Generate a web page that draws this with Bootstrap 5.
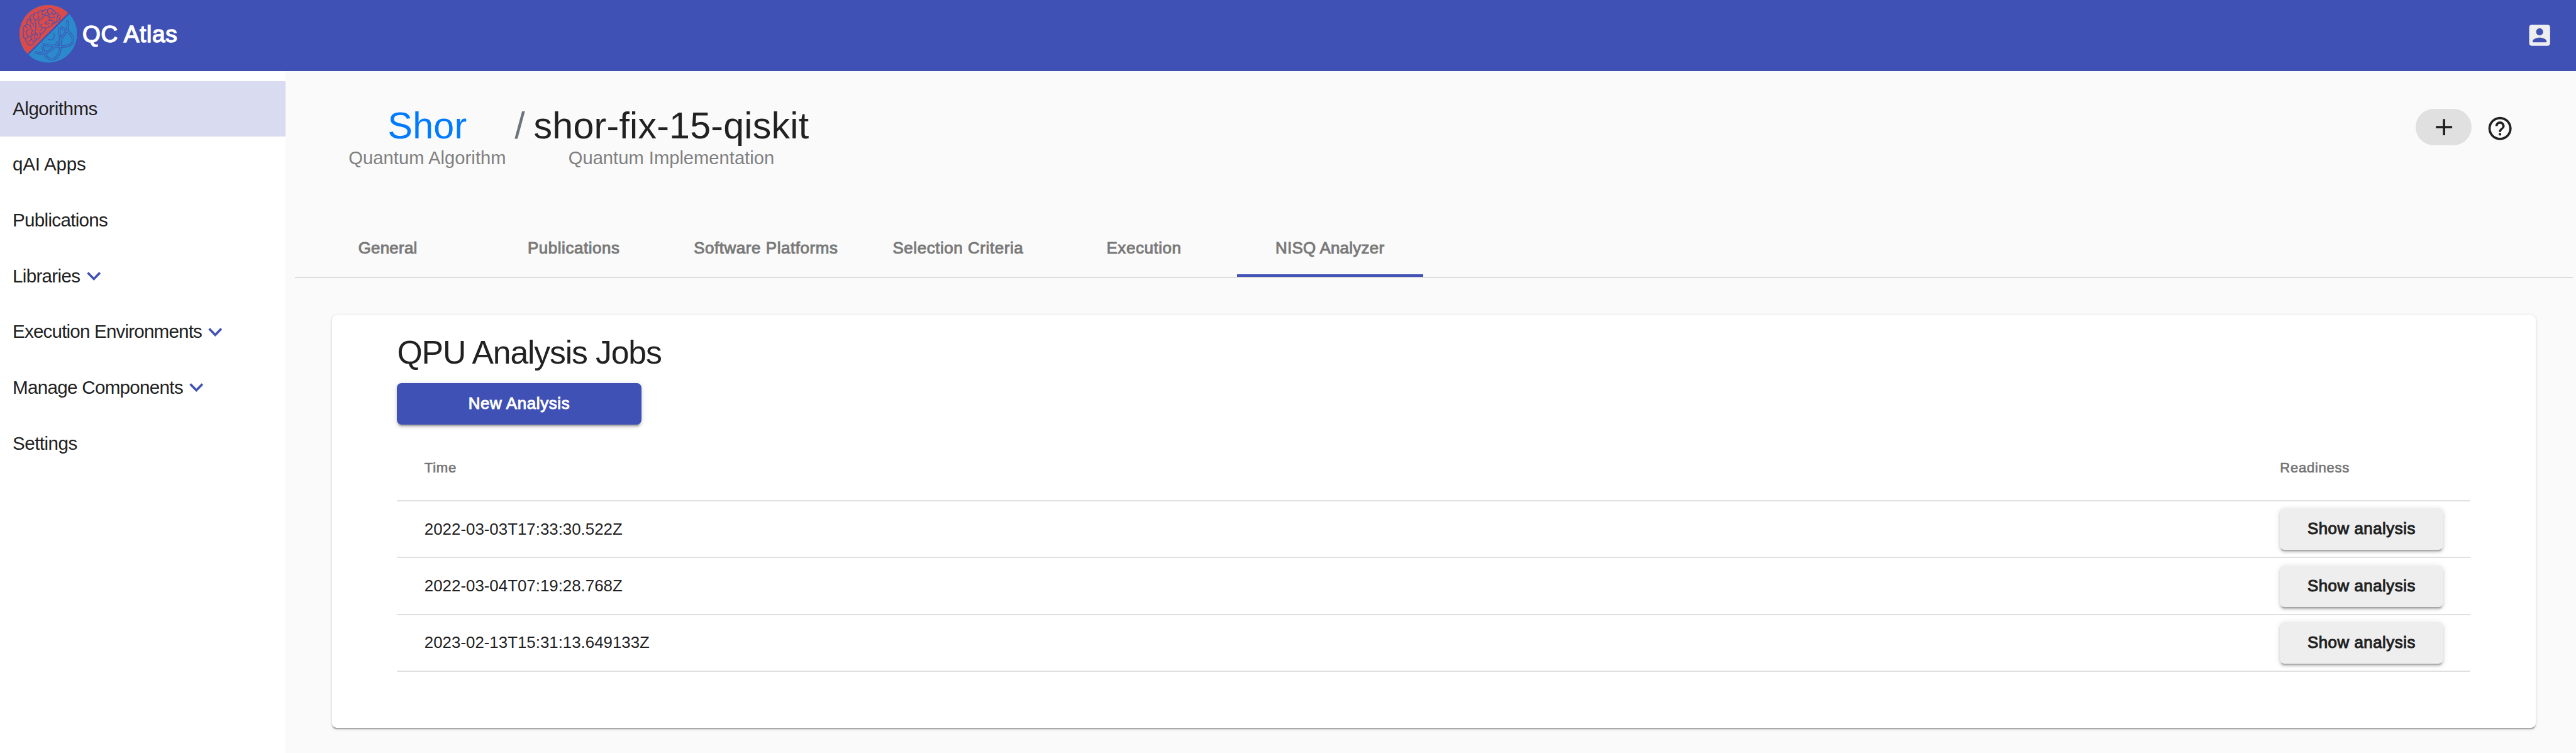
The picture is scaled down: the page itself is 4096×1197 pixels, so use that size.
<!DOCTYPE html>
<html lang="en">
<head>
<meta charset="utf-8">
<title>QC Atlas</title>
<meta name="viewport" content="width=device-width, initial-scale=1">
<link href="https://cdn.jsdelivr.net/npm/bootstrap@5.3.0/dist/css/bootstrap.min.css" rel="stylesheet">
<style>
  html { font-size: calc(100vw / 509.8); }
  body { font-family: "Liberation Sans", Arial, sans-serif; background: #fafafa; color: #212121; height: 100vh; overflow: hidden; font-size: 3.22rem; line-height: 1.5; }
  .semi { -webkit-text-stroke: .04em currentColor; }
  .topbar { height: 14.1rem; padding: 0 4.4rem 0 3.8rem; background: #3f51b5; color: #fff; }
  .logo-img { width: 11.4rem; height: 11.4rem; }
  .brand-box { padding-bottom: .7rem; gap: 1.1rem; color: #fff; }
  .brand-name { font-size: 4.6rem; line-height: 1; margin-top: .3rem; letter-spacing: .09rem; }
  .user-icon { width: 5.52rem; height: 5.52rem; fill: #eee; }
  .sidebar { width: 56.5rem; padding-top: 1.9rem; background: #fff; font-size: 3.68rem; letter-spacing: -.085rem; }
  .side-item { height: 11.04rem; padding-left: 2.5rem; color: #212121; gap: 1.3rem; text-decoration: none; }
  .side-item.active { background: #d9dbf0; letter-spacing: -.06rem; }
  .side-item:nth-child(2) { letter-spacing: -.03rem; }
  .side-item:nth-child(5) { letter-spacing: -.1rem; }
  .side-item:last-child { letter-spacing: -.065rem; }
  .chev { width: 2.8rem; height: 2rem; fill: none; stroke: #3f51b5; stroke-width: 4.6; }
  .title-row { height: 29.6rem; padding: 6.78rem 12.3rem 0 12.5rem; }
  .title-main { font-size: 7.36rem; line-height: 8rem; letter-spacing: .028rem; }
  .title-sub { font-size: 3.63rem; line-height: 4.8rem; color: #808080; }
  .title-algo { color: #007bff; text-decoration: none; }
  .title-algo + .title-sub { letter-spacing: .005rem; }
  .title-sep { color: #6c757d; margin: 0 1.7rem; }
  .add-btn { width: 11.1rem; height: 7.3rem; background: #e0e0e0; border-radius: 3.65rem; margin: .62rem 2.8rem 0 0; }
  .ico { width: 5.52rem; height: 5.52rem; fill: #212121; }
  .help-ico { margin-top: 1.72rem; }
  .tabs { margin: 0 .65rem 0 1.85rem; border-bottom: 2px solid #dcdcdc; letter-spacing: .075rem; }
  .tabs .tab { min-width: 36.8rem; height: 11.04rem; padding: .2rem 5.36rem 0; color: #7a7a7a; border-bottom: .5rem solid transparent; }
  .tabs .tab:first-child, .tabs .tab:last-child { letter-spacing: .035rem; }
  .tabs .tab.active { border-bottom-color: #3f51b5; }
  .panel { margin: 7.31rem 8rem 0 9.2rem; height: 81.7rem; padding: 3.84rem 12.9rem 0; border: 0; border-radius: .92rem; background: #fff;
    box-shadow: 0 .46rem .23rem -.23rem rgba(0,0,0,.2), 0 .23rem .23rem rgba(0,0,0,.14), 0 .23rem .69rem rgba(0,0,0,.12); }
  .panel h1 { font-size: 6.44rem; line-height: 7.4rem; margin: 0 0 2.26rem; font-weight: 400; letter-spacing: -.145rem; }
  .raised { height: 8.2rem; border: 0; border-radius: .92rem; font-size: 3.22rem; padding: 0; line-height: 1; letter-spacing: .065rem;
    box-shadow: 0 .69rem .23rem -.46rem rgba(0,0,0,.2), 0 .46rem .46rem rgba(0,0,0,.14), 0 .23rem 1.15rem rgba(0,0,0,.12); }
  .new-btn { width: 48.3rem; background: #3f51b5; color: #fff; letter-spacing: .08rem; }
  .show-btn { width: 32.3rem; background: #eee; color: #212121; }
  .jobs { margin: 2.2rem 0 0; table-layout: fixed; width: 100%; --bs-table-bg: transparent; --bs-table-color: #212121; }
  .jobs > :not(caption) > * > * { border-bottom: 2px solid #e0e0e0; padding: 0; vertical-align: middle; }
  .jobs th { height: 12.9rem; font-size: 2.76rem; font-weight: 400; color: #757575; letter-spacing: .085rem; -webkit-text-stroke: .03em currentColor; }
  .jobs td { height: 11.24rem; }
  .jobs > :not(caption) > * > :first-child { padding-left: 5.4rem; }
  .jobs .col-ready { width: 37.7rem; }
</style>
<script src="https://cdn.jsdelivr.net/npm/bootstrap@5.3.0/dist/js/bootstrap.bundle.min.js"></script>
</head>
<body class="d-flex flex-column">
<nav class="topbar d-flex align-items-center justify-content-between flex-shrink-0">
  <a class="brand-box d-flex align-items-center text-decoration-none" href="#">
    <svg class="logo-img" viewBox="6 6 342 342" fill="none" stroke-linecap="round" stroke-linejoin="round">
      <circle cx="177" cy="177" r="171" fill="#2a8acb"/>
      <path d="M298 56A171 171 0 1 0 56 298Z" fill="#d94b4b"/>
      <path d="M310 45L45 310" stroke="#3f51b5" stroke-width="9" stroke-linecap="butt"/>
      <g stroke="#3f51b5" stroke-width="4.2">
        <path d="M66 241A14 14 0 0 1 50 225A14 14 0 0 1 44 205A14 14 0 0 1 31 185A18 18 0 0 1 34 162A18 18 0 0 1 37 132A15 15 0 0 1 55 123A20 20 0 0 1 72 89A16 16 0 0 1 92 65A17 17 0 0 1 118 54A17 17 0 0 1 146 42A18 18 0 0 1 172 38A20 20 0 0 1 208 38A15 15 0 0 1 219 55A16 16 0 0 1 240 62A15 15 0 0 1 243 86A15 15 0 0 1 225 104A17 17 0 0 1 202 112A16 16 0 0 1 182 131A16 16 0 0 1 158 140A18 18 0 0 1 148 166A16 16 0 0 1 124 172A18 18 0 0 1 126 196A15 15 0 0 1 104 206A14 14 0 0 1 86 224A12 12 0 0 1 82 241A10 10 0 0 1 66 241"/>
        <path d="M48 205q6-18 24-14M57 190q-14-14-8-30q4-10 14-8M37 134q12-2 16 10M57 123q16 0 16 16q0 14 12 18q-12 14-2 26q-14 4-8 20q2 12 14 14M74 89q-8 16 4 24q10 4 14 16M92 66q-10 20 8 30q14-2 20-12M100 96q-6 16 6 26q-10 14 0 26q-14 10-4 24q10 4 12 18M118 55q-6 16 4 24M146 43q-12 10-4 22q12 0 20-8M150 72q20-10 32 4q10 16-8 26q-12 2-16 14M146 74q-4 14-14 16q-18 8-12 24q4 12 20 10M174 40q-6 14 8 20q14 2 20-6M182 60q-8 12 2 20q16 6 30-4M208 40q-12 4-10 16M219 56q-12 2-12 12M186 98q12-6 22 2q8 6 4 12M158 116q12 6 24 0M120 134q14-6 20 6q0 14-14 18M140 140q10 4 18 0M84 186q10-12 22-8M92 206q10-10 6-22M62 222q14-8 18-20M232 66q4 10-4 16q4 12-2 20"/>
      </g>
      <g stroke="#3f51b5" stroke-width="14.5" stroke-linecap="butt">
        <path d="M287 96C300 125 296 150 268 185C235 235 175 320 96 285"/>
        <path d="M242 137C240 165 252 205 250 245C248 340 175 355 152 285C147 270 144 258 142 247"/>
        <path d="M247 138C290 152 325 185 324 215C322 265 235 255 140 241"/>
      </g>
      <g stroke="#2a8acb" stroke-width="6.5" stroke-linecap="butt">
        <path d="M286 94C300 125 296 150 268 185C235 235 175 320 94 284"/>
        <path d="M242 134C240 165 252 205 250 245C248 340 175 355 152 285C147 270 144 258 141 244"/>
        <path d="M244 137C290 152 325 185 324 215C322 265 235 255 137 240"/>
      </g>
      <path d="M207 175C220 192 208 224 175 209" stroke="#3f51b5" stroke-width="4.2"/>
    </svg>
    <span class="brand-name semi">QC Atlas</span>
  </a>
  <svg class="user-icon" viewBox="0 0 24 24"><path d="M3 5v14c0 1.1.89 2 2 2h14c1.1 0 2-.9 2-2V5c0-1.1-.9-2-2-2H5c-1.11 0-2 .9-2 2zm12 4c0 1.66-1.34 3-3 3s-3-1.34-3-3 1.34-3 3-3 3 1.34 3 3zm-9 8c0-2 4-3.1 6-3.1s6 1.1 6 3.1v1H6v-1z"/></svg>
</nav>
<div class="d-flex flex-grow-1">
  <aside class="sidebar flex-shrink-0">
    <a class="side-item active d-flex align-items-center" href="#">Algorithms</a>
    <a class="side-item d-flex align-items-center" href="#">qAI Apps</a>
    <a class="side-item d-flex align-items-center" href="#">Publications</a>
    <a class="side-item d-flex align-items-center" href="#">Libraries<svg class="chev" viewBox="0 0 28 20"><path d="M2 3L14 15.5L26 3"/></svg></a>
    <a class="side-item d-flex align-items-center" href="#">Execution Environments<svg class="chev" viewBox="0 0 28 20"><path d="M2 3L14 15.5L26 3"/></svg></a>
    <a class="side-item d-flex align-items-center" href="#">Manage Components<svg class="chev" viewBox="0 0 28 20"><path d="M2 3L14 15.5L26 3"/></svg></a>
    <a class="side-item d-flex align-items-center" href="#">Settings</a>
  </aside>
  <main class="flex-grow-1">
    <div class="title-row d-flex justify-content-between align-items-start">
      <div class="d-flex">
        <div class="text-center"><a class="title-main title-algo d-block" href="#">Shor</a><div class="title-sub">Quantum Algorithm</div></div>
        <div class="title-main title-sep">/</div>
        <div class="text-center"><div class="title-main">shor-fix-15-qiskit</div><div class="title-sub">Quantum Implementation</div></div>
      </div>
      <div class="d-flex align-items-start">
        <button class="add-btn btn p-0 border-0 d-flex align-items-center justify-content-center"><svg class="ico" viewBox="0 0 24 24"><path d="M19 13h-6v6h-2v-6H5v-2h6V5h2v6h6v2z"/></svg></button>
        <svg class="ico help-ico" viewBox="0 0 24 24"><path d="M11 18h2v-2h-2v2zm1-16C6.48 2 2 6.48 2 12s4.48 10 10 10 10-4.48 10-10S17.52 2 12 2zm0 18c-4.41 0-8-3.59-8-8s3.59-8 8-8 8 3.59 8 8-3.59 8-8 8zm0-14c-2.21 0-4 1.79-4 4h2c0-1.1.9-2 2-2s2 .9 2 2c0 2-3 1.75-3 5h2c0-2.25 3-2.5 3-5 0-2.21-1.79-4-4-4z"/></svg>
      </div>
    </div>
    <div class="tabs semi d-flex">
      <div class="tab d-flex align-items-center justify-content-center">General</div>
      <div class="tab d-flex align-items-center justify-content-center">Publications</div>
      <div class="tab d-flex align-items-center justify-content-center">Software Platforms</div>
      <div class="tab d-flex align-items-center justify-content-center">Selection Criteria</div>
      <div class="tab d-flex align-items-center justify-content-center">Execution</div>
      <div class="tab active d-flex align-items-center justify-content-center">NISQ Analyzer</div>
    </div>
    <section class="panel card">
      <h1>QPU Analysis Jobs</h1>
      <button class="btn raised new-btn semi">New Analysis</button>
      <table class="table jobs">
        <thead><tr><th>Time</th><th class="col-ready">Readiness</th></tr></thead>
        <tbody>
          <tr><td>2022-03-03T17:33:30.522Z</td><td><button class="btn raised show-btn semi">Show analysis</button></td></tr>
          <tr><td>2022-03-04T07:19:28.768Z</td><td><button class="btn raised show-btn semi">Show analysis</button></td></tr>
          <tr><td>2023-02-13T15:31:13.649133Z</td><td><button class="btn raised show-btn semi">Show analysis</button></td></tr>
        </tbody>
      </table>
    </section>
  </main>
</div>
</body>
</html>
